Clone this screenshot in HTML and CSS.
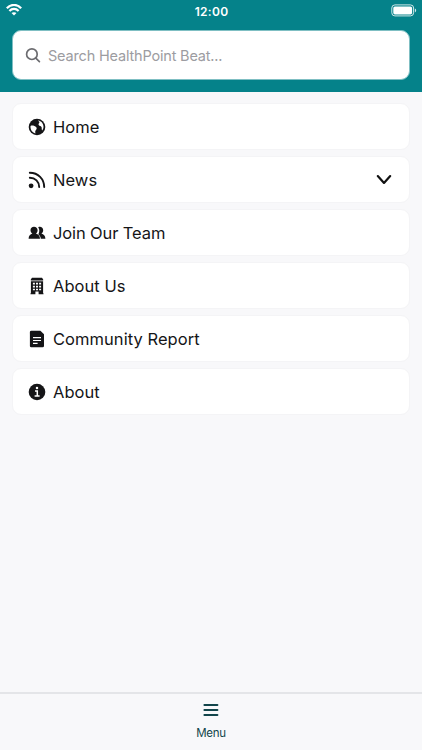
FILE: index.html
```html
<!DOCTYPE html>
<html lang="en">
<head>
<meta charset="utf-8">
<title>HealthPoint Beat</title>
<link rel="stylesheet" href="styles.css">
</head>
<body>
<header class="header">
  <div class="status">
    <svg class="wifi" width="16" height="12" viewBox="0 0 16 12" fill="none" stroke="#fff" stroke-width="2.2"><path d="M.8 4.2C5-.2 11-.2 15.2 4.2M3.4 6.9C6 4.2 10 4.2 12.6 6.9"/><path d="M8 11.6 5.5 9.1C6.8 7.8 9.2 7.8 10.5 9.1Z" fill="#fff" stroke="none"/></svg>
    <span class="time">12:00</span>
    <svg class="battery" width="26" height="13" viewBox="0 0 26 13"><rect x=".8" y=".9" width="21.8" height="11" rx="3.1" fill="none" stroke="#d2e8e9" stroke-width="1"/><rect x="2.3" y="2.4" width="18.8" height="8" rx="1.6" fill="#fff"/><path d="M23.9 4.6c1.7.6 1.7 3.2 0 3.8z" fill="#d2e8e9"/></svg>
  </div>
  <label class="search">
    <svg width="16" height="16" viewBox="0 0 16 16" fill="none" stroke="#6c6c70" stroke-width="1.7" stroke-linecap="round"><circle cx="6.9" cy="7.2" r="5.3"/><path d="m10.8 11.1 3.6 3.5"/></svg>
    <span>Search HealthPoint Beat...</span>
  </label>
</header>
<main class="list">
  <a class="card"><svg class="icon" viewBox="0 0 18 18"><circle cx="9" cy="9" r="8.3"/><path fill="#fff" d="M2.5 8C3.6 7.4 5 7.6 6.4 8 7.7 8.4 8.8 9.5 8.7 10.6 8.6 11.8 7.3 12.4 7.2 13.6L7.4 15.4C4.6 14.8 2.2 12 2.5 8ZM10.2 2.6C13.2 3 15.5 5.6 15.5 8.8 15.5 10.3 15 11.5 14.3 12.4 13.4 11.9 13.9 10.4 13.6 9.3 13.2 7.8 11.5 8 10.7 6.9 9.9 5.8 11.7 5.2 11.4 4.1 11.2 3.4 10.1 3.4 10.2 2.6Z"/></svg><span>Home</span></a>
  <a class="card"><svg class="icon" viewBox="0 0 18 18"><circle cx="3.1" cy="14.8" r="2.4"/><path fill="none" stroke="currentColor" stroke-width="1.9" stroke-linecap="round" d="M1.8 6.7c5.4 0 9.4 4 9.4 9.4M1.8 1.7c8.3 0 14.4 6.2 14.4 14.4"/></svg><span>News</span><svg class="chevron" width="16" height="12" viewBox="0 0 16 12"><path d="m1.8 2.1 6.2 6.8 6.2-6.8"/></svg></a>
  <a class="card"><svg class="icon" viewBox="0 0 18 18"><path d="M10.2 3.2c2.4-1 5 .3 5 3 0 1.5-.7 2.8-1.8 3.4 2.2.7 4 2.2 4 5.1h-4.6c-.2-2-1-3.4-2.5-4.5 1.2-1.7 1.5-5-.1-7Z"/><path d="M6 2.7c2.1 0 3.6 1.5 3.6 3.5 0 1.5-.7 2.8-1.7 3.4 2.3.8 4.1 2.3 4.1 5.1H.6c0-2.8 1.7-4.3 3.8-5.1-1.1-.6-1.9-1.9-1.9-3.4 0-2 1.4-3.5 3.5-3.5Z"/></svg><span class="tight">Join Our Team</span></a>
  <a class="card"><svg class="icon" viewBox="0 0 18 18"><path d="M4 .8h10l1.2 1.8v.9H2.8v-.9ZM2.9 4.2h12.2v12h.4v1.1h-4.9v-2.8H7.4v2.8H2.5v-1.1h.4Z"/><path fill="#fff" d="M4.9 5.7h2v1.8h-2zM8 5.7h2v1.8H8zM11.1 5.7h2v1.8h-2zM4.9 8.7h2v1.8h-2zM8 8.7h2v1.8H8zM11.1 8.7h2v1.8h-2zM4.9 11.7h2v1.6h-2zM8 11.7h2v1.6H8zM11.1 11.7h2v1.6h-2z"/></svg><span>About Us</span></a>
  <a class="card"><svg class="icon" viewBox="0 0 18 18"><path d="M3.3.7h9.1L16 4.3v11.6q0 1.4-1.4 1.4H3.3Q1.9 17.3 1.9 15.9V2.1Q1.9.7 3.3.7Z"/><path fill="none" stroke="#fff" stroke-width="1.2" d="M5 7.6h8M5 10.5h8M5 13.4h4.6"/></svg><span>Community Report</span></a>
  <a class="card"><svg class="icon" viewBox="0 0 18 18"><circle cx="9" cy="9" r="8.3"/><circle cx="9" cy="5.1" r="1.25" fill="#fff"/><path fill="none" stroke="#fff" stroke-width="1.5" d="M7 8h2.3v5M6.6 13.1h5"/></svg><span>About</span></a>
</main>
<nav class="tabs">
  <svg width="16" height="14" viewBox="0 0 16 14" fill="none" stroke="#12454b" stroke-width="2" stroke-linecap="round"><path d="M1.4 1.9h13M1.4 7h13M1.4 12.1h13"/></svg>
  <span>Menu</span>
</nav>
</body>
</html>
```
FILE: styles.css
```css
* {
  box-sizing: border-box;
}

body {
  margin: 0;
  height: 750px;
  display: flex;
  flex-direction: column;
  overflow: hidden;
  background: #f8f8fa;
  color: #151517;
  font-family: Inter, "Liberation Sans", sans-serif;
}

.header {
  height: 92px;
  background: #05828a;
}

.status {
  height: 30px;
  padding: 4px 5px 0 6px;
  display: grid;
  grid-template-columns: 26px 1fr 26px;
  align-items: start;
}

.time {
  color: #fff;
  font-size: 12px;
  font-weight: 600;
  line-height: 15px;
  letter-spacing: 0.3px;
  text-align: center;
}

.search {
  margin: 0 12px;
  height: 50px;
  padding: 0 12px;
  display: flex;
  align-items: center;
  gap: 7px;
  background: #fff;
  border: 1px solid #7fbfc3;
  border-radius: 9px;
  color: #9c9ca1;
  font-size: 14.5px;
  letter-spacing: -0.18px;
}

.search span {
  padding-top: 1px;
}

.list {
  flex: 1;
  padding: 11px 12px;
  display: flex;
  flex-direction: column;
  gap: 6px;
}

.card {
  height: 47px;
  padding: 0 15px;
  display: flex;
  align-items: center;
  background: #fff;
  border: 1px solid #f4f4f6;
  border-radius: 9px;
  font-size: 16.5px;
  line-height: 20px;
  letter-spacing: 0.05px;
}

.card .tight {
  letter-spacing: -0.12px;
}

.icon {
  width: 18px;
  height: 18px;
  margin-right: 7px;
  fill: currentColor;
}

.chevron {
  margin-left: auto;
  margin-right: 2px;
  fill: none;
  stroke: #111;
  stroke-width: 2.2;
  stroke-linecap: round;
  stroke-linejoin: round;
}

.tabs {
  height: 58px;
  padding-top: 9px;
  display: flex;
  flex-direction: column;
  align-items: center;
  gap: 9px;
  border-top: 2px solid #e4e5e8;
  color: #12454b;
  font-size: 11.5px;
  line-height: 15px;
  letter-spacing: -0.3px;
}
```
